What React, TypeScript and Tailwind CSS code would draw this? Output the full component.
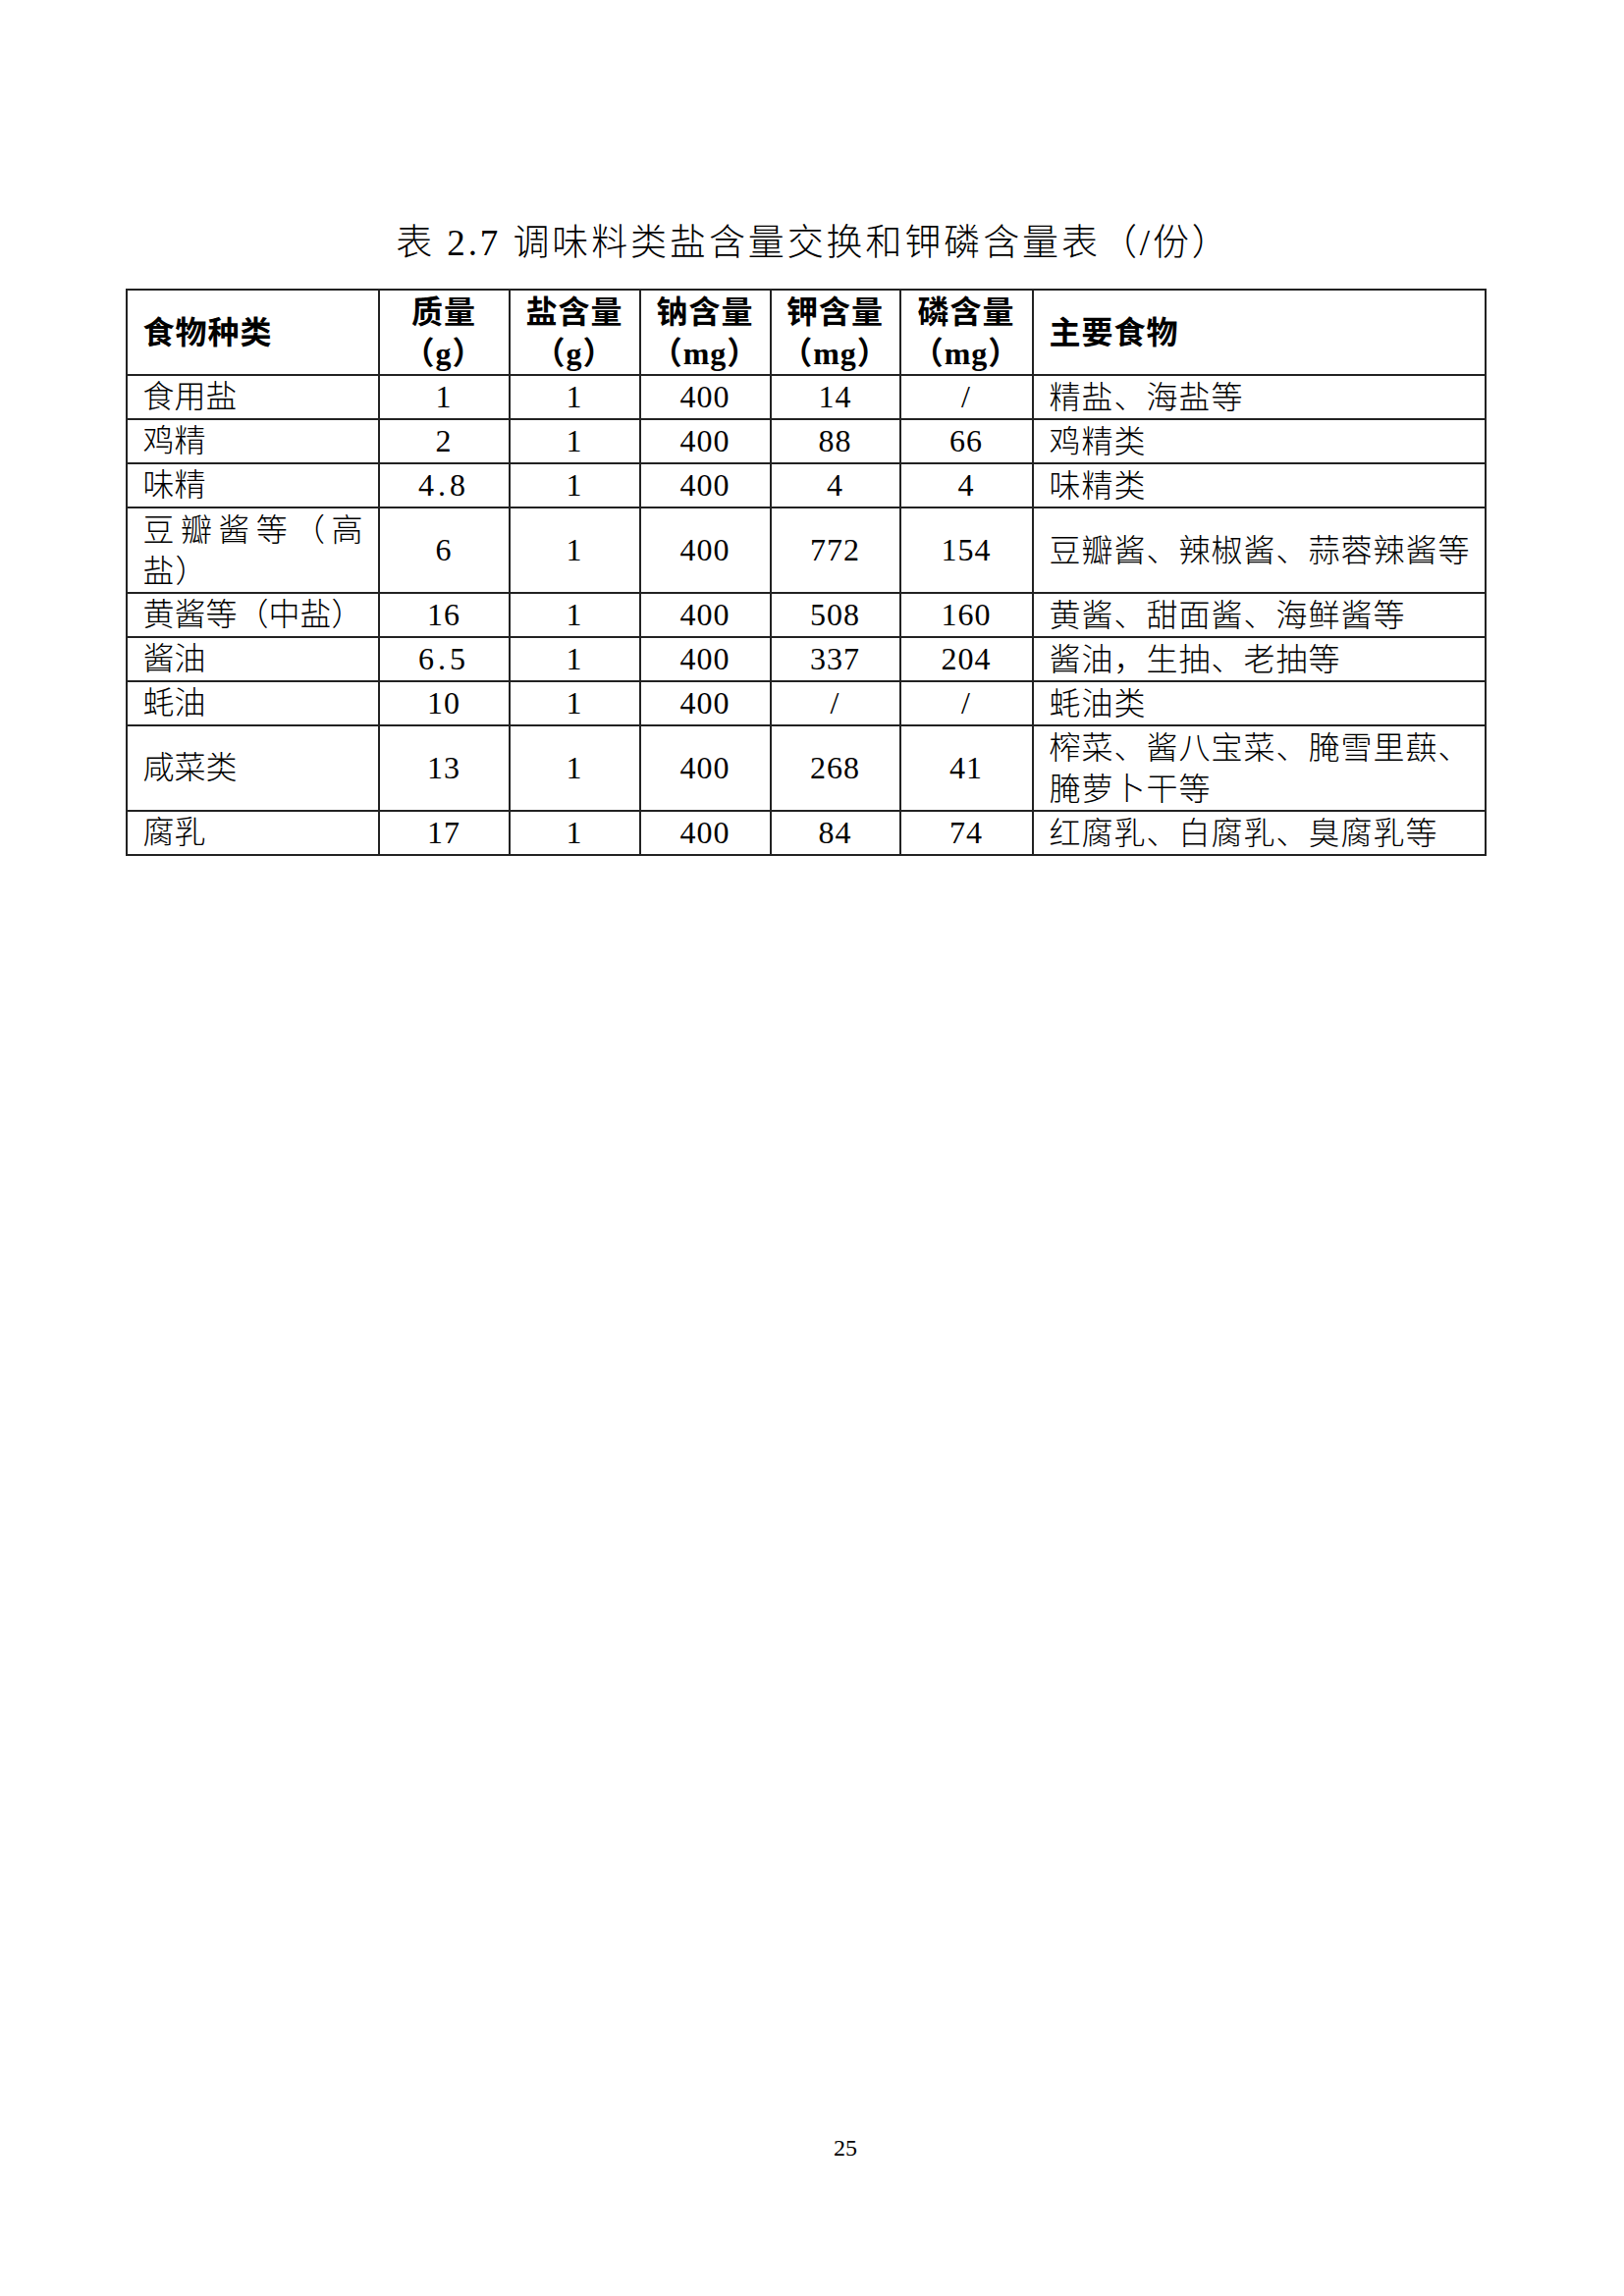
import React from 'react';

interface Row {
  name: string;
  mass: string;
  salt: string;
  sodium: string;
  potassium: string;
  phosphorus: string;
  foods: string;
  tall?: boolean;
}

const rows: Row[] = [
  { name: '食用盐', mass: '1', salt: '1', sodium: '400', potassium: '14', phosphorus: '/', foods: '精盐、海盐等' },
  { name: '鸡精', mass: '2', salt: '1', sodium: '400', potassium: '88', phosphorus: '66', foods: '鸡精类' },
  { name: '味精', mass: '4.8', salt: '1', sodium: '400', potassium: '4', phosphorus: '4', foods: '味精类' },
  { name: '豆瓣酱等（高盐）', mass: '6', salt: '1', sodium: '400', potassium: '772', phosphorus: '154', foods: '豆瓣酱、辣椒酱、蒜蓉辣酱等', tall: true },
  { name: '黄酱等（中盐）', mass: '16', salt: '1', sodium: '400', potassium: '508', phosphorus: '160', foods: '黄酱、甜面酱、海鲜酱等' },
  { name: '酱油', mass: '6.5', salt: '1', sodium: '400', potassium: '337', phosphorus: '204', foods: '酱油，生抽、老抽等' },
  { name: '蚝油', mass: '10', salt: '1', sodium: '400', potassium: '/', phosphorus: '/', foods: '蚝油类' },
  { name: '咸菜类', mass: '13', salt: '1', sodium: '400', potassium: '268', phosphorus: '41', foods: '榨菜、酱八宝菜、腌雪里蕻、腌萝卜干等', tall: true },
  { name: '腐乳', mass: '17', salt: '1', sodium: '400', potassium: '84', phosphorus: '74', foods: '红腐乳、白腐乳、臭腐乳等' },
];

const cell = 'border-2 border-[#222] p-0 align-middle';

// name cell: the high-salt one is spread across the first line like the original
const NameCell: React.FC<{ name: string }> = ({ name }) => {
  if (name === '豆瓣酱等（高盐）') {
    return (
      <div className="pl-[16px] pr-[14px] leading-[42px]">
        <div className="flex justify-between">
          {'豆瓣酱等（高'.split('').map((c, i) => (
            <span key={i}>{c}</span>
          ))}
        </div>
        <div>盐）</div>
      </div>
    );
  }
  return <div className="pl-[16px] whitespace-nowrap tracking-normal">{name}</div>;
};

const Num: React.FC<{ v: string }> = ({ v }) => (
  <div className={`text-center ${v.includes('.') ? 'tracking-[4px]' : ''}`}>{v}</div>
);

const App: React.FC = () => {
  return (
    <div
      className="w-[1654px] h-[2339px] bg-white text-black flex flex-col items-center pr-[13px]"
      style={{ fontFamily: '"Liberation Serif", "Noto Sans CJK SC", serif' }}
    >
      {/* Title */}
      <div className="mt-[222px] ml-[16px] text-[37px] leading-[52px] tracking-[2.9px] font-light">
        表 2.7 调味料类盐含量交换和钾磷含量表（/份）
      </div>

      {/* Table */}
      <table className="mt-[20px] w-[1384px] table-fixed border-collapse text-[32px] leading-[41px] font-light tracking-[1px]">
        <colgroup>
          <col className="w-[257px]" />
          <col className="w-[133px]" />
          <col className="w-[133px]" />
          <col className="w-[133px]" />
          <col className="w-[132px]" />
          <col className="w-[135px]" />
          <col className="w-[461px]" />
        </colgroup>
        <thead>
          <tr className="h-[87px] font-bold leading-[42px]">
            <th className={`${cell} text-left`}>
              <div className="pl-[16px]">食物种类</div>
            </th>
            <th className={cell}>
              <div>质量</div>
              <div>（g）</div>
            </th>
            <th className={cell}>
              <div>盐含量</div>
              <div>（g）</div>
            </th>
            <th className={cell}>
              <div>钠含量</div>
              <div>（mg）</div>
            </th>
            <th className={cell}>
              <div>钾含量</div>
              <div>（mg）</div>
            </th>
            <th className={cell}>
              <div>磷含量</div>
              <div>（mg）</div>
            </th>
            <th className={`${cell} text-left`}>
              <div className="pl-[16px]">主要食物</div>
            </th>
          </tr>
        </thead>
        <tbody>
          {rows.map((r) => (
            <tr key={r.name} className={r.tall ? 'h-[87px]' : 'h-[45px]'}>
              <td className={cell}>
                <NameCell name={r.name} />
              </td>
              <td className={cell}>
                <Num v={r.mass} />
              </td>
              <td className={cell}>
                <Num v={r.salt} />
              </td>
              <td className={cell}>
                <Num v={r.sodium} />
              </td>
              <td className={cell}>
                <Num v={r.potassium} />
              </td>
              <td className={cell}>
                <Num v={r.phosphorus} />
              </td>
              <td className={cell}>
                <div className="pl-[16px] pr-[4px] leading-[42px]">{r.foods}</div>
              </td>
            </tr>
          ))}
        </tbody>
      </table>

      {/* Page number */}
      <div className="mt-auto mb-[136px] pl-[81px] text-[24px] leading-[30px]">25</div>
    </div>
  );
};

export default App;
